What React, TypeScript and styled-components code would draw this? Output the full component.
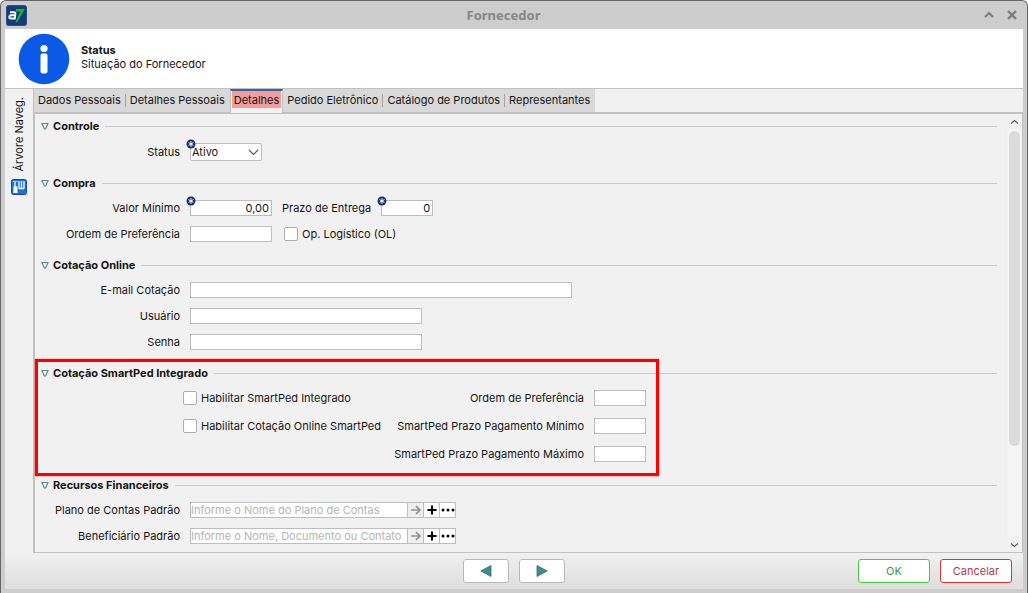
import React from "react";
import styled, { createGlobalStyle, css } from "styled-components";

const Global = createGlobalStyle`
  *, *::before, *::after { box-sizing: border-box; }
  body { margin: 0; background: #fff; }
  body, button, input, select { font-family: Inter, "Liberation Sans", sans-serif; font-size: 11px; line-height: 14px; color: #141414; }
`;

const line = "#c1c1c1";

const Window = styled.div`
  display: flex;
  flex-direction: column;
  min-height: 100vh;
  padding: 0 4px 4px;
  background: #cdcdcd;
  border: 1px solid #666;
  border-bottom: 0;
  border-radius: 6px 6px 0 0;
`;

const TitleBar = styled.header`
  display: grid;
  grid-template-columns: 1fr auto 1fr;
  align-items: center;
  height: 28px;
  padding: 0 4px 0 1px;
`;

const Title = styled.h1`
  margin: 0;
  padding-right: 18px;
  font-family: "Noto Sans", "Open Sans", sans-serif;
  font-size: 13px;
  line-height: 18px;
  font-weight: 700;
  color: #868686;
`;

const WindowButtons = styled.div`
  display: flex;
  justify-content: flex-end;
  gap: 9px;
`;

const PlainButton = styled.button`
  display: flex;
  align-items: center;
  justify-content: center;
  width: 14px;
  height: 14px;
  padding: 0;
  border: 0;
  background: none;
`;

const Banner = styled.section`
  display: flex;
  align-items: center;
  gap: 11px;
  height: 60px;
  padding-left: 13px;
  background: #fff;
  border-bottom: 1px solid ${line};
`;

const BannerText = styled.p`
  margin: 0;
  padding-bottom: 4px;
  strong { display: block; font-weight: 700; }
`;

const Body = styled.div`
  display: flex;
  flex: 1;
  background: #f1f1f1;
`;

const Rail = styled.button`
  display: flex;
  flex-direction: column;
  align-items: center;
  gap: 7px;
  width: 28px;
  padding: 8px 0 0;
  border: 0;
  background: none;
`;

const RailText = styled.span`
  writing-mode: vertical-rl;
  transform: rotate(180deg);
  font-size: 11px;
`;

const Main = styled.main`
  display: flex;
  flex: 1;
  flex-direction: column;
  min-width: 0;
  border-left: 2px solid ${line};
`;

const Tabs = styled.nav`
  display: flex;
  align-self: flex-start;
  height: 23px;
  margin-left: -1px;
  background: #d9d9d9;
`;

const Tab = styled.button<{ $active?: boolean; $divider?: boolean }>`
  position: relative;
  height: 23px;
  padding: 0 5px 2px 4px;
  border: 0;
  background: none;
  white-space: nowrap;
  ${(p) =>
    p.$divider &&
    css`
      &::after {
        content: "";
        position: absolute;
        right: 0;
        top: 5px;
        width: 1px;
        height: 13px;
        background: #a5a5a5;
      }
    `}
  ${(p) =>
    p.$active &&
    css`
      height: 24px;
      padding: 0 1px 5px 1px;
      border: 1px solid ${line};
      border-top: 2px solid #2f66a0;
      border-bottom: 0;
      background: #f1f1f1;
      z-index: 1;
      span { display: block; padding: 2px 2px 1px; background: #f69c9c; }
    `}
`;

const Panel = styled.div`
  display: flex;
  flex: 1;
  border: solid ${line};
  border-width: 2px 1px 1px 0;
`;

const Form = styled.form`
  flex: 1;
  min-width: 0;
  padding: 4px 10px 0 0;
`;

const GroupBox = styled.section`
  position: relative;
  padding-bottom: 10px;
  &:last-child { padding-bottom: 0; }
`;

const GroupTitle = styled.h2`
  display: flex;
  align-items: center;
  gap: 4px;
  height: 16px;
  margin: 0 0 4px;
  padding-left: 6px;
  font-size: 11px;
  font-weight: 700;
  &::after { content: ""; flex: 1; height: 1px; margin-left: 2px; background: #c9c9c9; }
`;

const Row = styled.div<{ $tall?: boolean }>`
  display: flex;
  align-items: center;
  gap: 10px;
  height: ${(p) => (p.$tall ? 27 : 26)}px;
`;

const Label = styled.label<{ $column?: boolean }>`
  flex: none;
  text-align: right;
  white-space: nowrap;
  ${(p) => p.$column && css`width: 145px;`}
`;

const Holder = styled.span`
  position: relative;
  display: flex;
`;

const Badge = styled.svg`
  position: absolute;
  left: -4px;
  top: -4px;
`;

const Field = styled.input<{ $w: number }>`
  width: ${(p) => p.$w}px;
  height: 16px;
  padding: 0 2px;
  border: 1px solid #bdbdbd;
  border-radius: 0;
  background: #fff;
  &::placeholder { color: #b4b4b4; opacity: 1; }
  &[inputmode="decimal"] { text-align: right; }
`;

const LookupField = styled(Field)`
  padding: 0;
`;

const Select = styled.select`
  appearance: none;
  width: 72px;
  height: 18px;
  padding: 0 0 0 1px;
  border: 1px solid #bdbdbd;
  border-radius: 2px;
  background: #fff;
`;

const Chevron = styled.svg`
  position: absolute;
  right: 3px;
  top: 6px;
  pointer-events: none;
`;

const Check = styled.label`
  display: flex;
  align-items: center;
  gap: 4px;
  padding-left: 2px;
  white-space: nowrap;
  input {
    appearance: none;
    flex: none;
    width: 14px;
    height: 14px;
    margin: 0;
    border: 1px solid #adadad;
    border-radius: 2px;
    background: #fff;
  }
`;

const IntegrationGrid = styled.div`
  display: grid;
  grid-template-columns: 202px 191px 52px;
  grid-auto-rows: 16px;
  align-items: center;
  gap: 12px 10px;
  padding: 5px 0 5px 146px;
  ${Label} { grid-column: 2; }
`;

const Highlight = styled.div`
  position: absolute;
  left: 0;
  top: -6px;
  bottom: 1px;
  width: 624px;
  border: 3px solid #f00;
  box-shadow: 0 0 1px #f00;
  pointer-events: none;
`;

const Lookup = styled.div`
  display: flex;
`;

const LookupButton = styled(PlainButton)<{ $muted?: boolean }>`
  width: 16px;
  height: 16px;
  border: 1px solid #bdbdbd;
  border-left-width: 0;
  background: ${(p) => (p.$muted ? "#efefef" : "#fff")};
`;

const Scrollbar = styled.div`
  display: flex;
  flex-direction: column;
  width: 15px;
`;

const ScrollArrow = styled(PlainButton)`
  width: 15px;
  height: 15px;
`;

const Track = styled.div`
  flex: 1;
  padding: 2px;
  background: #f5f5f5;
`;

const Thumb = styled.div`
  height: 78%;
  border-radius: 6px;
  background: #dbdbdb;
`;

const Footer = styled.footer`
  display: grid;
  grid-template-columns: 1fr auto 1fr;
  align-items: center;
  height: 36px;
  padding-right: 11px;
  background: linear-gradient(#f1f1f1, #e1e1e1 80%);
`;

const Buttons = styled.div<{ $nav?: boolean }>`
  display: flex;
  justify-content: flex-end;
  gap: 10px;
  ${(p) => p.$nav && css`grid-column: 2; padding-left: 11px;`}
`;

const Button = styled.button<{ $tone?: string; $text?: string; $w: number }>`
  display: flex;
  align-items: center;
  justify-content: center;
  width: ${(p) => p.$w}px;
  height: 24px;
  padding: 0;
  border: 1px solid ${(p) => p.$tone ?? "#b9b9b9"};
  border-radius: 3px;
  background: #fff;
  color: ${(p) => p.$text};
`;

const AppLogo = () => (
  <svg width="21" height="21" viewBox="0 0 21 21" aria-hidden="true">
    <rect x=".5" y=".5" width="20" height="20" rx="2" fill="#163a80" stroke="#2b4a8a" />
    <path d="M4 7.300h4q1.600 0 1.400 1.500l-.6 4.700H5q-1.900 0-1.700-1.700t2-1.600h3.600" fill="none" stroke="#fff" strokeWidth="1.900" />
    <path d="M10 4h8.800L11 17.500l-1.500-.4L14.500 6.500H10z" fill="#0cc41f" />
  </svg>
);

const InfoIcon = () => (
  <svg width="52" height="52" viewBox="0 0 52 52" aria-hidden="true">
    <circle cx="26" cy="26" r="25.300" fill="#0b5ae6" />
    <circle cx="26" cy="15.500" r="3.600" fill="#fff" />
    <rect x="22.500" y="20.500" width="7" height="20" rx="2" fill="#fff" />
  </svg>
);

const TreeIcon = () => (
  <svg width="16" height="16" viewBox="0 0 16 16" aria-hidden="true">
    <rect x=".5" y=".5" width="15" height="15" rx="2" fill="#1d72e0" stroke="#14489c" />
    <path d="M2 2.500h12" stroke="#8dbdf5" />
    <path d="M4 2.500V8M8 3v6.500M13 3v6.500M10.500 3v6.500M8 9.500h5" fill="none" stroke="#fff" strokeWidth="1.300" />
    <rect x="2.500" y="7.500" width="4" height="6.500" fill="#fff" />
  </svg>
);

const Required = () => (
  <Badge width="10" height="10" viewBox="0 0 10 10" aria-hidden="true">
    <circle cx="5" cy="5" r="4.500" fill="#15336e" />
    <path d="M5 2.200v5.600M2.600 3.600l4.800 2.800M7.400 3.600L2.600 6.400" stroke="#fff" strokeWidth="1" />
  </Badge>
);

const Caret = ({ up }: { up?: boolean }) => (
  <svg width="9" height="6" viewBox="0 0 9 6" aria-hidden="true">
    <path d={up ? "M1 4.500L4.500 1.500 8 4.500" : "M1 1.500L4.500 4.500 8 1.500"} fill="none" stroke="#5f5f5f" strokeWidth="1.200" />
  </svg>
);

const Group = ({ title, children }: { title: string; children: React.ReactNode }) => (
  <GroupBox>
    <GroupTitle>
      <svg width="8" height="8" viewBox="0 0 8 8" aria-hidden="true">
        <path d="M1 1.500h6L4.600 7H3.400z" fill="#f4fafa" stroke="#5c8c92" strokeWidth="1.200" />
      </svg>
      {title}
    </GroupTitle>
    {children}
  </GroupBox>
);

const LookupRow = ({ id, label, hint }: { id: string; label: string; hint: string }) => (
  <Row>
    <Label $column htmlFor={id}>{label}</Label>
    <Lookup>
      <LookupField id={id} $w={218} placeholder={hint} />
      <LookupButton $muted type="button" aria-label="Abrir">
        <svg width="12" height="10" viewBox="0 0 12 10"><path d="M1 5h9M6 1.200L10 5 6 8.800" fill="none" stroke="#929292" strokeWidth="1.700" /></svg>
      </LookupButton>
      <LookupButton type="button" aria-label="Adicionar">
        <svg width="10" height="10" viewBox="0 0 10 10"><path d="M5 .5v9M.5 5h9" stroke="#000" strokeWidth="2" /></svg>
      </LookupButton>
      <LookupButton type="button" aria-label="Mais opções">
        <svg width="14" height="4" viewBox="0 0 14 4"><circle cx="2" cy="2" r="1.500" /><circle cx="7" cy="2" r="1.500" /><circle cx="12" cy="2" r="1.500" /></svg>
      </LookupButton>
    </Lookup>
  </Row>
);

export default function App() {
  return (
    <>
      <Global />
      <Window>
        <TitleBar>
          <AppLogo />
          <Title>Fornecedor</Title>
          <WindowButtons>
            <PlainButton aria-label="Maximizar">
              <svg width="10" height="8" viewBox="0 0 10 8"><path d="M1 6l4-4 4 4" fill="none" stroke="#7c7c7c" strokeWidth="2.200" /></svg>
            </PlainButton>
            <PlainButton aria-label="Fechar">
              <svg width="10" height="10" viewBox="0 0 10 10"><path d="M1 1l8 8M9 1L1 9" stroke="#7c7c7c" strokeWidth="2.400" /></svg>
            </PlainButton>
          </WindowButtons>
        </TitleBar>
        <Banner>
          <InfoIcon />
          <BannerText><strong>Status</strong>Situação do Fornecedor</BannerText>
        </Banner>
        <Body>
          <Rail>
            <RailText>Árvore Naveg.</RailText>
            <TreeIcon />
          </Rail>
          <Main>
            <Tabs>
              <Tab $divider>Dados Pessoais</Tab>
              <Tab>Detalhes Pessoais</Tab>
              <Tab $active><span>Detalhes</span></Tab>
              <Tab $divider>Pedido Eletrônico</Tab>
              <Tab $divider>Catálogo de Produtos</Tab>
              <Tab>Representantes</Tab>
            </Tabs>
            <Panel>
              <Form>
                <Group title="Controle">
                  <Row $tall>
                    <Label $column htmlFor="status">Status</Label>
                    <Holder>
                      <Select id="status"><option>Ativo</option></Select>
                      <Chevron width="11" height="7" viewBox="0 0 11 7"><path d="M1 1l4.500 4.500L10 1" fill="none" stroke="#555" strokeWidth="1.100" /></Chevron>
                      <Required />
                    </Holder>
                  </Row>
                </Group>
                <Group title="Compra">
                  <Row>
                    <Label $column htmlFor="minimo">Valor Mínimo</Label>
                    <Holder><Field id="minimo" $w={82} inputMode="decimal" defaultValue="0,00" /><Required /></Holder>
                    <Label htmlFor="entrega">Prazo de Entrega</Label>
                    <Holder><Field id="entrega" $w={52} inputMode="decimal" defaultValue="0" /><Required /></Holder>
                  </Row>
                  <Row>
                    <Label $column htmlFor="ordem">Ordem de Preferência</Label>
                    <Field id="ordem" $w={82} />
                    <Check><input type="checkbox" />Op. Logístico (OL)</Check>
                  </Row>
                </Group>
                <Group title="Cotação Online">
                  <Row>
                    <Label $column htmlFor="email">E-mail Cotação</Label>
                    <Field id="email" $w={382} />
                  </Row>
                  <Row>
                    <Label $column htmlFor="usuario">Usuário</Label>
                    <Field id="usuario" $w={232} />
                  </Row>
                  <Row>
                    <Label $column htmlFor="senha">Senha</Label>
                    <Field id="senha" type="password" $w={232} />
                  </Row>
                </Group>
                <Group title="Cotação SmartPed Integrado">
                  <IntegrationGrid>
                    <Check><input type="checkbox" />Habilitar SmartPed Integrado</Check>
                    <Label htmlFor="ordem-smart">Ordem de Preferência</Label>
                    <Field id="ordem-smart" $w={52} />
                    <Check><input type="checkbox" />Habilitar Cotação Online SmartPed</Check>
                    <Label htmlFor="prazo-min">SmartPed Prazo Pagamento Mínimo</Label>
                    <Field id="prazo-min" $w={52} />
                    <Label htmlFor="prazo-max">SmartPed Prazo Pagamento Máximo</Label>
                    <Field id="prazo-max" $w={52} />
                  </IntegrationGrid>
                  <Highlight />
                </Group>
                <Group title="Recursos Financeiros">
                  <LookupRow id="plano" label="Plano de Contas Padrão" hint="Informe o Nome do Plano de Contas" />
                  <LookupRow id="beneficiario" label="Beneficiário Padrão" hint="Informe o Nome, Documento ou Contato" />
                </Group>
              </Form>
              <Scrollbar>
                <ScrollArrow aria-label="Rolar para cima"><Caret up /></ScrollArrow>
                <Track><Thumb /></Track>
                <ScrollArrow aria-label="Rolar para baixo"><Caret /></ScrollArrow>
              </Scrollbar>
            </Panel>
          </Main>
        </Body>
        <Footer>
          <Buttons $nav>
            <Button $w={46} aria-label="Anterior">
              <svg width="12" height="12" viewBox="0 0 12 12"><path d="M11 .5v11L.8 6z" fill="#438a8f" stroke="#2f6f78" strokeWidth=".8" /></svg>
            </Button>
            <Button $w={46} aria-label="Próximo">
              <svg width="12" height="12" viewBox="0 0 12 12"><path d="M1 .5v11L11.200 6z" fill="#438a8f" stroke="#2f6f78" strokeWidth=".8" /></svg>
            </Button>
          </Buttons>
          <Buttons>
            <Button $w={72} $tone="#3fcf3a" $text="#2f9a50">OK</Button>
            <Button $w={72} $tone="#e03030" $text="#b23a48">Cancelar</Button>
          </Buttons>
        </Footer>
      </Window>
    </>
  );
}
